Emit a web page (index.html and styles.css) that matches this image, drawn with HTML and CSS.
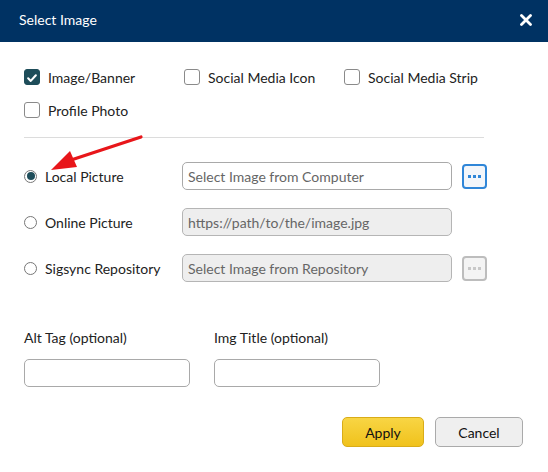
FILE: index.html
```html
<!DOCTYPE html>
<html>
<head>
<meta charset="utf-8">
<link rel="stylesheet" href="styles.css">
</head>
<body>
<div class="dialog">
  <div class="header">
    <span class="title">Select Image</span>
    <svg class="close" width="12" height="12" viewBox="0 0 12 12"><path d="M1.5 1.5 L10.5 10.5 M10.5 1.5 L1.5 10.5" stroke="#fff" stroke-width="2.8" stroke-linecap="round"/></svg>
  </div>
  <div class="content">
    <div class="checks">
      <label class="check"><span class="box checked"><svg viewBox="0 0 16 16" width="16" height="16"><path d="M3.6 8.4 L6.6 11.3 L12.4 4.9" fill="none" stroke="#fff" stroke-width="2.4" stroke-linecap="round" stroke-linejoin="round"/></svg></span>Image/Banner</label>
      <label class="check"><span class="box"></span>Social Media Icon</label>
      <label class="check"><span class="box"></span>Social Media Strip</label>
      <label class="check"><span class="box"></span>Profile Photo</label>
    </div>
    <div class="divider"></div>
    <div class="sources">
      <div class="source">
        <label class="radio-label"><span class="radio on"></span>Local Picture</label>
        <div class="input"><span class="ph">Select Image from Computer</span></div>
        <span class="dots"><i></i><i></i><i></i></span>
      </div>
      <div class="source">
        <label class="radio-label"><span class="radio"></span>Online Picture</label>
        <div class="input disabled"><span class="ph">https://path/to/the/image.jpg</span></div>
      </div>
      <div class="source">
        <label class="radio-label"><span class="radio"></span>Sigsync Repository</label>
        <div class="input disabled"><span class="ph">Select Image from Repository</span></div>
        <span class="dots off"><i></i><i></i><i></i></span>
      </div>
    </div>
    <div class="fields">
      <div class="field">
        <div class="flabel">Alt Tag (optional)</div>
        <div class="input small"></div>
      </div>
      <div class="field">
        <div class="flabel">Img Title (optional)</div>
        <div class="input small"></div>
      </div>
    </div>
    <div class="actions">
      <button class="btn apply">Apply</button>
      <button class="btn cancel">Cancel</button>
    </div>
  </div>
  <svg class="arrow" width="548" height="472" viewBox="0 0 548 472">
    <line x1="141" y1="137" x2="68" y2="161" stroke="#e8161a" stroke-width="3.2" stroke-linecap="round"/>
    <polygon points="51,170 70,151 77,167" fill="#e8161a"/>
  </svg>
</div>
</body>
</html>
```
FILE: styles.css
```css
* { box-sizing: border-box; }
html, body { margin: 0; padding: 0; background: #fff; }
body {
  font-family: Lato, "Open Sans", "Liberation Sans", sans-serif;
  font-size: 14px;
  color: #222;
  width: 548px;
  height: 472px;
  overflow: hidden;
}
.dialog { position: relative; width: 548px; height: 472px; }
.header {
  height: 42px;
  background: #003263;
  display: flex;
  align-items: center;
  justify-content: space-between;
  padding: 0 16px 3px 19px;
  color: #fff;
}
.title { font-size: 14px; }
.close { display: block; }
.content { padding: 25px 24px 0 24px; }
.checks {
  display: grid;
  grid-template-columns: 160px 160px auto;
  row-gap: 13px;
}
.check {
  display: flex;
  align-items: center;
  height: 20px;
  gap: 8px;
  color: #222;
}
.box {
  width: 16px; height: 16px;
  border: 1px solid #8a8a8a;
  border-radius: 3px;
  background: #fff;
  display: flex;
}
.box.checked { background: #1e4d5a; border-color: #1e4d5a; }
.box svg { display: block; }
.divider {
  width: 460px;
  height: 1px;
  background: #dcdcdc;
  margin-top: 17px;
}
.sources {
  margin-top: 24px;
  display: flex;
  flex-direction: column;
  gap: 18px;
}
.source { display: flex; align-items: center; height: 28px; }
.radio-label {
  width: 158px;
  display: flex;
  align-items: center;
  gap: 8px;
}
.radio {
  width: 13px; height: 13px;
  border: 1px solid #777;
  border-radius: 50%;
  background: #fff;
  position: relative;
}
.radio.on::after {
  content: "";
  position: absolute;
  left: 1.5px; top: 1.5px;
  width: 8px; height: 8px;
  border-radius: 50%;
  background: #1e4d5a;
}
.input {
  width: 270px;
  height: 28px;
  border: 1px solid #a9a9a9;
  border-radius: 5px;
  background: #fff;
  display: flex;
  align-items: center;
  padding-left: 5px;
}
.input.disabled { background: #eeeeee; border-color: #b5b5b5; }
.ph { color: #666; font-size: 14px; }
.dots {
  margin-left: 10px;
  width: 25px; height: 25px;
  border: 2px solid #2f86d8;
  border-radius: 4px;
  background: #f3f6fa;
  display: flex;
  align-items: center;
  justify-content: center;
  gap: 2px;
}
.dots i { width: 3px; height: 3px; background: #2f86d8; display: block; }
.dots.off { border-color: #bdbdbd; background: #f4f4f4; }
.dots.off i { background: #c8c8c8; }
.fields { display: flex; gap: 24px; margin-top: 46px; }
.flabel { height: 20px; line-height: 20px; color: #222; margin-bottom: 11px; }
.input.small { width: 166px; }
.actions {
  display: flex;
  justify-content: flex-end;
  gap: 11px;
  margin-top: 30px;
  padding-right: 1px;
}
.btn {
  height: 30px;
  font-family: Lato, "Liberation Sans", sans-serif;
  font-size: 14px;
  color: #111;
  border-radius: 5px;
  padding: 0;
}
.apply {
  width: 82px;
  background: linear-gradient(#f8d544, #f0c21c);
  border: 1px solid #d9ac18;
}
.cancel {
  width: 88px;
  background: #efefef;
  border: 1px solid #aaa;
}
.arrow { position: absolute; left: 0; top: 0; pointer-events: none; }
```
